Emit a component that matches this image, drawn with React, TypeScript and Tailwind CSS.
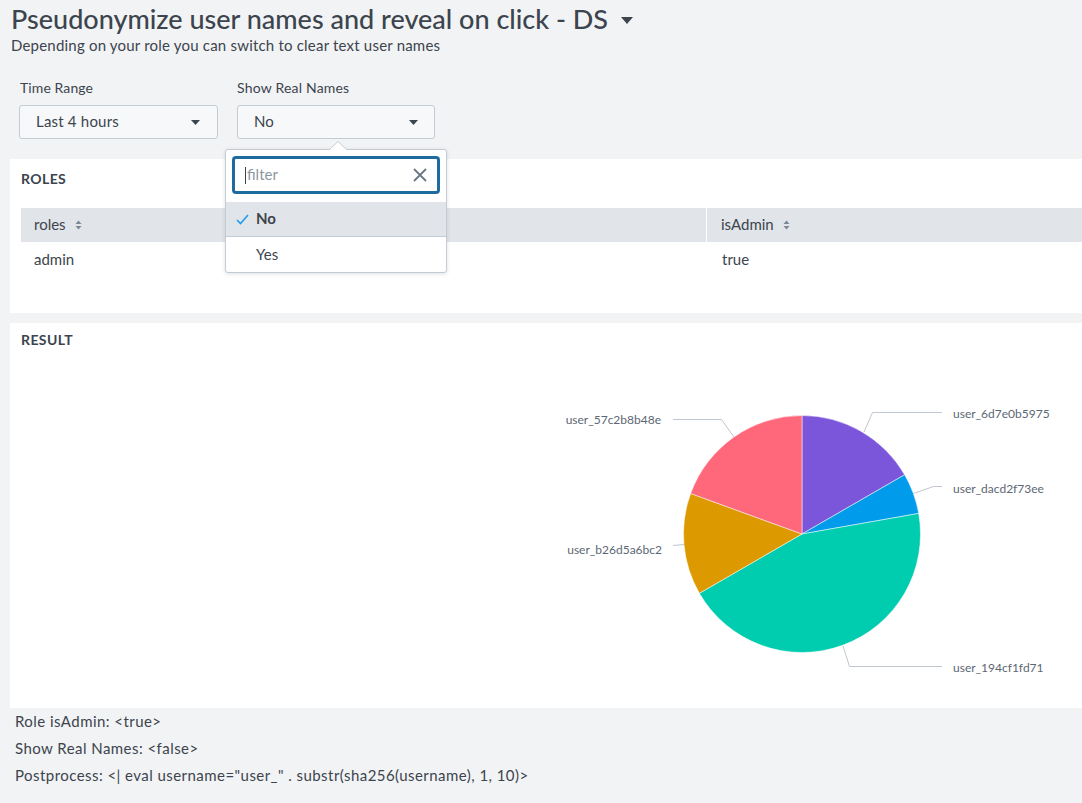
import React from 'react';

const Caret = ({ className = '' }: { className?: string }) => (
  <svg width="9" height="5" viewBox="0 0 9 5" className={className}>
    <path d="M0 0 L9 0 L4.5 5 Z" fill="#3c444d" />
  </svg>
);

const SortIcon = () => (
  <svg width="7" height="10" viewBox="0 0 7 10" className="ml-[9px]">
    <path d="M0.5 4 L6.5 4 L3.5 0.5 Z" fill="#7b8794" />
    <path d="M0.5 6 L6.5 6 L3.5 9.5 Z" fill="#7b8794" />
  </svg>
);

const slices = [
  { from: 0, to: 60, color: '#7b56db' },
  { from: 60, to: 80, color: '#009ceb' },
  { from: 80, to: 240, color: '#00cdaf' },
  { from: 240, to: 290, color: '#dd9900' },
  { from: 290, to: 360, color: '#ff677b' },
];

const cx = 802;
const cy = 534;
const r = 118.5;

const pt = (deg: number) => {
  const a = (deg * Math.PI) / 180;
  return [cx + r * Math.sin(a), cy - r * Math.cos(a)];
};

const arc = (from: number, to: number) => {
  const [x1, y1] = pt(from);
  const [x2, y2] = pt(to);
  const large = to - from > 180 ? 1 : 0;
  return `M${cx} ${cy} L${x1} ${y1} A${r} ${r} 0 ${large} 1 ${x2} ${y2} Z`;
};

const PieChart = () => (
  <svg width="1072" height="350" viewBox="0 0 1072 350" className="block">
    <g transform="translate(-10,-358)">
      {slices.map((s) => (
        <path key={s.color} d={arc(s.from, s.to)} fill={s.color} stroke="#ffffff" strokeWidth="0.5" />
      ))}
      <g fill="none" stroke="#c0c7cf" strokeWidth="1">
        <polyline points="864,432 872.5,412.5 942,412.5" />
        <polyline points="913.5,493.5 933.5,486.5 942,486.5" />
        <polyline points="843,646 849.5,666.5 942,666.5" />
        <polyline points="734,437 721.5,419.5 673,419.5" />
        <polyline points="684,544.5 673,545.5" />
      </g>
      <g fill="#5c6773" fontSize="12" fontFamily="Lato, sans-serif">
        <text x="953" y="417.5">user_6d7e0b5975</text>
        <text x="953" y="493">user_dacd2f73ee</text>
        <text x="953" y="671.5">user_194cf1fd71</text>
        <text x="661" y="424" textAnchor="end">user_57c2b8b48e</text>
        <text x="662" y="553.5" textAnchor="end">user_b26d5a6bc2</text>
      </g>
    </g>
  </svg>
);

export default function App() {
  return (
    <div className="w-[1082px] h-[803px] overflow-hidden bg-[#f2f3f5] text-[#3c444d] font-['Lato','Open_Sans',sans-serif]">
      {/* header */}
      <div className="pl-[11px] pt-[3px]">
        <div className="flex items-center">
          <h1 className="text-[27px] leading-[32px] font-medium">Pseudonymize user names and reveal on click - DS</h1>
          <svg width="12" height="7" viewBox="0 0 12 7" className="ml-[13px] mt-[2px]">
            <path d="M0 0 L12 0 L6 7 Z" fill="#3c444d" />
          </svg>
        </div>
        <p className="text-[15px] leading-[20px] tracking-[0.2px]">Depending on your role you can switch to clear text user names</p>
      </div>

      {/* inputs */}
      <div className="flex gap-[19px] pl-[19px] mt-[24px]">
        <div className="flex flex-col w-[199px]">
          <label className="text-[14px] leading-[18px] pl-[1px] tracking-[0.1px]">Time Range</label>
          <div className="mt-[8px] h-[34px] border border-[#c3cbd4] rounded-[3px] bg-[#f7f8fa] flex items-center justify-between pl-[16px] pr-[17px] text-[15px]">
            <span className="pb-[2px] tracking-[0.2px]">Last 4 hours</span>
            <Caret />
          </div>
        </div>
        <div className="relative flex flex-col w-[198px]">
          <label className="text-[14px] leading-[18px] tracking-[0.2px]">Show Real Names</label>
          <div className="mt-[8px] h-[34px] border border-[#c3cbd4] rounded-[3px] bg-[#f7f8fa] flex items-center justify-between pl-[16px] pr-[16px] text-[15px]">
            <span className="pb-[1px]">No</span>
            <Caret />
          </div>

          {/* popup */}
          <div className="absolute left-[-12px] top-[70px] z-10 w-[222px] bg-white border border-[#c3cbd4] rounded-[3px] shadow-[0_1px_4px_rgba(0,0,0,0.12)]">
            <svg width="18" height="9" viewBox="0 0 18 9" className="absolute left-[103px] top-[-9px]">
              <path d="M0 9 L9 0.5 L18 9" fill="#ffffff" stroke="#c3cbd4" strokeWidth="1" />
            </svg>
            <div className="p-[6px] pb-[8px]">
              <div className="h-[38px] border-[3px] border-[#1e6b9e] rounded-[4px] flex items-center justify-between pl-[10px] pr-[10px]">
                <div className="flex items-center">
                  <span className="w-px h-[17px] bg-[#3c444d]" />
                  <span className="text-[15px] text-[#8c96a1] ml-[1px] pb-[2px]">filter</span>
                </div>
                <svg width="14" height="14" viewBox="0 0 14 14">
                  <path d="M1 1 L13 13 M13 1 L1 13" stroke="#6b7785" strokeWidth="1.8" />
                </svg>
              </div>
            </div>
            <div className="h-[35px] bg-[#e1e5e9] flex items-center border-b border-[#c3cbd4]">
              <svg width="13" height="11" viewBox="0 0 13 11" className="ml-[10px]">
                <path d="M1 6 L4.5 9.5 L12 1" fill="none" stroke="#1a9cf0" strokeWidth="1.6" />
              </svg>
              <span className="ml-[7px] text-[15px] font-bold pb-[1px]">No</span>
            </div>
            <div className="h-[35px] flex items-center pl-[30px] text-[15px]">Yes</div>
          </div>
        </div>
      </div>

      {/* ROLES panel */}
      <div className="ml-[10px] mt-[20px] bg-white h-[154px] pl-[11px]">
        <div className="pt-[11px] h-[49px] text-[14px] leading-[18px] font-bold tracking-[0.4px]">ROLES</div>
        <div className="flex h-[34px] bg-[#e1e4e8] text-[15px]">
          <div className="w-[686px] flex items-center pl-[13px] border-r border-white">
            <span className="pb-[1px]">roles</span>
            <SortIcon />
          </div>
          <div className="flex-1 flex items-center pl-[14px]">
            <span className="pb-[1px]">isAdmin</span>
            <SortIcon />
          </div>
        </div>
        <div className="flex h-[36px] text-[15px]">
          <div className="w-[687px] flex items-center pl-[13px] pb-[1px]">admin</div>
          <div className="flex-1 flex items-center pl-[14px] pb-[1px]">true</div>
        </div>
      </div>

      {/* RESULT panel */}
      <div className="ml-[10px] mt-[10px] bg-white h-[385px]">
        <div className="pl-[11px] pt-[8px] h-[35px] text-[14px] leading-[18px] font-bold tracking-[0.4px]">RESULT</div>
        <PieChart />
      </div>

      {/* footer text */}
      <div className="pl-[15px] text-[15px] leading-[27px] tracking-[0.45px]">
        <div>Role isAdmin: &lt;true&gt;</div>
        <div>Show Real Names: &lt;false&gt;</div>
        <div>Postprocess: &lt;| eval username="user_" . substr(sha256(username), 1, 10)&gt;</div>
      </div>
    </div>
  );
}
